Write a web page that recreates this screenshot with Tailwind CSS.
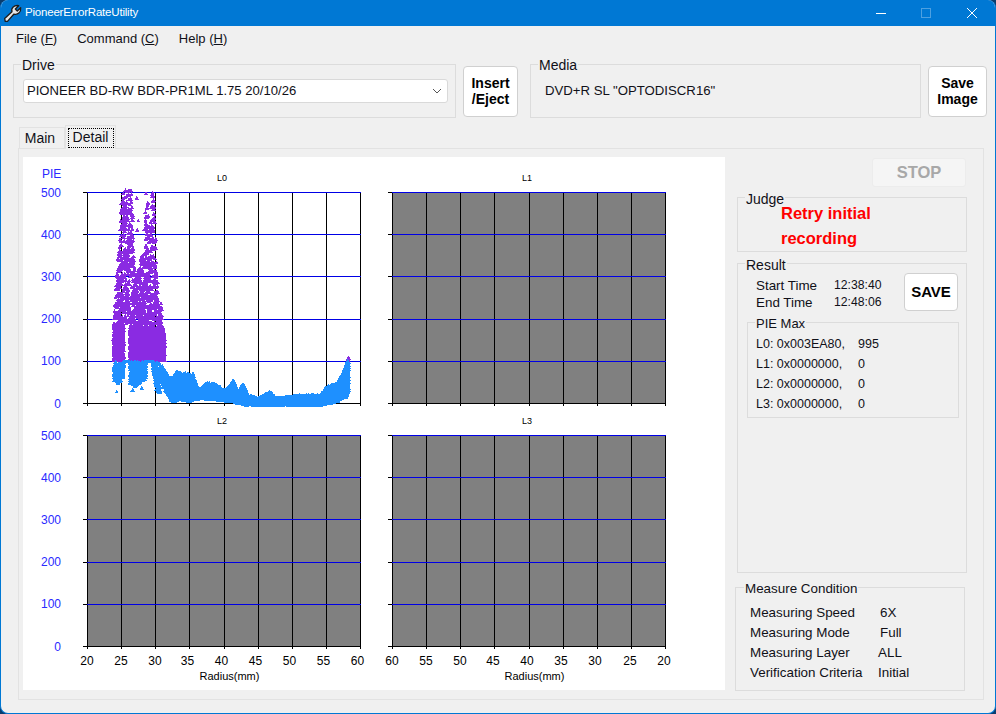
<!DOCTYPE html>
<html lang="en">
<head>
    <meta charset="UTF-8">
    <title>PioneerErrorRateUtility</title>
    <script src="https://cdn.jsdelivr.net/npm/@tailwindcss/browser@4"></script>
</head>
<body class="w-[996px] h-[714px] overflow-hidden bg-[#0a3d6e] font-['Liberation_Sans',Arial,sans-serif] text-[14px] text-[#101018]">

<div class="w-[996px] h-[714px] flex flex-col rounded-t-lg rounded-b-lg overflow-hidden border border-t-0 border-[#0078d4] bg-[#f0f0f0]">

    <!-- title bar -->
    <div class="h-[26px] -mx-px shrink-0 bg-[#0078d4] flex items-center text-white text-[11.5px] tracking-[-0.2px]">
        <svg class="ml-[3px] w-[19px] h-[19px]" viewBox="0 0 17 17">
            <path d="M2 15.5 L1.5 13 L8 7 C7 3.5 10 .8 14 1.5 L11 4.5 L12.8 6.3 L15.8 3.4 C16.3 7.5 13 10 9.8 9 L4 15.5 Z" fill="#e8e8e8" stroke="#1c1c1c" stroke-width="1.2" stroke-linejoin="round"/>
        </svg>
        <span class="ml-[3px]">PioneerErrorRateUtility</span>
        <div class="ml-auto flex items-center">
            <svg class="w-[46px] h-[26px]" viewBox="0 0 46 26"><path d="M21 13.5h10" stroke="#fff"/></svg>
            <svg class="w-[46px] h-[26px]" viewBox="0 0 46 26"><rect x="20.5" y="8.5" width="9" height="9" fill="none" stroke="#fff" stroke-opacity=".3"/></svg>
            <svg class="w-[48px] h-[26px] mr-[1px]" viewBox="0 0 48 26"><path d="M20 8l10 10M30 8l-10 10" stroke="#fff"/></svg>
        </div>
    </div>

    <!-- menu -->
    <div class="h-[25px] shrink-0 flex items-center gap-[20px] pl-[15px] text-[13px]">
        <span>File (<u>F</u>)</span>
        <span>Command (<u>C</u>)</span>
        <span>Help (<u>H</u>)</span>
    </div>

    <!-- drive + media row -->
    <div class="flex items-start mt-[13px] h-[54px] pl-[12px]">
        <div class="relative w-[443px] h-[54px] border border-[#dcdcdc]">
            <span class="absolute left-[7px] -top-[8px] px-[1px] bg-[#f0f0f0] leading-[16px]">Drive</span>
            <div class="mt-[14px] ml-[9px] w-[425px] h-[24px] bg-white border border-[#d9d9d9] rounded-[3px] flex items-center pl-[3px] text-[13.1px]">
                <span>PIONEER BD-RW BDR-PR1ML 1.75 20/10/26</span>
                <svg class="ml-auto mr-[3px] w-[14px] h-[14px]" viewBox="0 0 14 14"><path d="M3 5l4 4 4-4" fill="none" stroke="#555"/></svg>
            </div>
        </div>
        <button class="mt-[2px] ml-[7px] w-[55px] h-[51px] pb-[2px] bg-white border border-[#d0d0d0] rounded-[4px] font-bold leading-[16px] text-black">Insert<br>/Eject</button>
        <div class="relative ml-[12px] w-[391px] h-[54px] border border-[#dcdcdc]">
            <span class="absolute left-[7px] -top-[8px] px-[1px] bg-[#f0f0f0] leading-[16px]">Media</span>
            <p class="mt-[18px] ml-[14px] leading-[16px] text-[13.2px]">DVD+R SL "OPTODISCR16"</p>
        </div>
        <button class="mt-[2px] ml-[7px] w-[59px] h-[51px] pb-[2px] bg-white border border-[#d0d0d0] rounded-[4px] font-bold leading-[16px] text-black">Save<br>Image</button>
    </div>

    <!-- tabs -->
    <div class="flex items-end h-[29px] mt-[1px] pl-[18px]">
        <div class="w-[46px] h-[21px] border border-b-0 border-[#e2e2e2] flex items-center justify-center pr-[4px]">Main</div>
        <div class="w-[51px] h-[24px] border border-b-0 border-[#e2e2e2] bg-[#f0f0f0] flex flex-col items-center pt-[2px] -mb-px relative z-10">
            <span class="w-[46px] h-[20px] border border-dotted border-black flex items-center justify-center leading-none pb-[3px]">Detail</span>
        </div>
    </div>

    <!-- tab page -->
    <div class="w-[966px] h-[552px] ml-[17px] border border-[#e2e2e2] flex">
        <div id="plots" class="ml-[4px] mt-[8px] w-[702px] h-[533px] bg-white grid grid-cols-[360px_342px] grid-rows-[254px_279px]"></div>

        <div class="ml-[12px] w-[230px] flex flex-col">
            <button class="self-end mt-[9px] mr-[1px] w-[94px] h-[29px] bg-[#f5f5f5] border border-[#ececec] rounded-[3px] font-bold text-[16.5px] text-[#a8a8a8]">STOP</button>

            <div class="relative mt-[10px] h-[55px] border border-[#dcdcdc]">
                <span class="absolute left-[7px] -top-[7px] px-[1px] bg-[#f0f0f0] leading-[16px]">Judge</span>
                <p class="ml-[43px] mt-[3px] w-[130px] font-bold text-[16.5px] leading-[25px] text-[#ff0000]">Retry initial recording</p>
            </div>

            <div class="relative mt-[11px] h-[310px] border border-[#dcdcdc]">
                <span class="absolute left-[7px] -top-[7px] px-[1px] bg-[#f0f0f0] leading-[16px]">Result</span>
                <div class="flex items-start">
                    <div class="ml-[18px] mt-[13px] grid grid-cols-[78px_auto] leading-[17px] text-[13.4px]">
                        <span>Start Time</span><span class="text-[12.2px]">12:38:40</span>
                        <span>End Time</span><span class="text-[12.2px]">12:48:06</span>
                    </div>
                    <button class="ml-auto mr-[8px] mt-[9px] w-[54px] h-[38px] bg-white border border-[#d0d0d0] rounded-[4px] font-bold text-[15px] text-black">SAVE</button>
                </div>
                <div class="relative ml-[9px] mt-[11px] w-[212px] h-[96px] border border-[#dcdcdc] pt-[11px] pl-[8px]">
                    <span class="absolute left-[7px] -top-[7px] px-[1px] bg-[#f0f0f0] leading-[16px] text-[13px]">PIE Max</span>
                    <div class="grid grid-cols-[102px_auto] leading-[20px] text-[12.5px] whitespace-nowrap">
                        <span>L0: 0x003EA80,</span><span>995</span>
                        <span>L1: 0x0000000,</span><span>0</span>
                        <span>L2: 0x0000000,</span><span>0</span>
                        <span>L3: 0x0000000,</span><span>0</span>
                    </div>
                </div>
            </div>

            <div class="relative -ml-[2px] mt-[14px] w-[230px] h-[104px] border border-[#dcdcdc] text-[13.4px]">
                <span class="absolute left-[8px] -top-[7px] px-[1px] bg-[#f0f0f0] leading-[16px]">Measure Condition</span>
                <div class="ml-[14px] mt-[15px] grid grid-cols-[130px_auto] leading-[20px] whitespace-nowrap">
                    <span>Measuring Speed</span><span>6X</span>
                    <span>Measuring Mode</span><span>Full</span>
                    <span>Measuring Layer</span><span class="-ml-[2px]">ALL</span>
                    <span>Verification Criteria</span><span class="-ml-[2px]">Initial</span>
                </div>
            </div>
        </div>
    </div>
</div>

<script>
    // small seeded random so the scatter is the same on every load
    let seed = 12345;
    function rnd() {
        seed = (seed * 1664525 + 1013904223) % 4294967296;
        return seed / 4294967296;
    }

    function lerp(table, x) {
        for (let i = 1; i < table.length; i++) {
            if (x <= table[i][0]) {
                const a = table[i - 1], b = table[i];
                return a[1] + (b[1] - a[1]) * (x - a[0]) / (b[0] - a[0]);
            }
        }
        return table[table.length - 1][1];
    }

    function tri(x, y) {
        return `M${x.toFixed(1)} ${(y - 2.2).toFixed(1)}l2.3 3.9h-4.6z`;
    }

    // tables below were read off the reference at 3x; plot origin is page (87, 192)
    const zx = x => 20 + x / 3 - 87;
    const zy = y => 160 + y / 3 - 192;

    function scatter() {
        let purple = '', blue = '';

        // purple towers, top edge
        const top = [[280,520],[285,420],[290,340],[298,240],[303,130],[308,90],[335,90],[340,250],[345,340],[352,340],[360,300],[372,260],[378,95],[383,95],[388,230],[395,95],[402,95],[408,250],[415,430],[425,440],[430,510],[435,540]];
        const notch = x => x > 311 && x < 329;
        for (let i = 0; i < 2000; i++) {
            const x = 281 + rnd() * 153;
            const t = lerp(top, x);
            const y = 600 - (600 - t) * Math.pow(rnd(), 1.7);
            if (notch(x) && y > 490) continue;
            purple += tri(zx(x), zy(y));
        }
        // solid foot of the towers
        for (let i = 0; i < 1500; i++) {
            const x = 283 + rnd() * 150;
            const y = 600 - rnd() * 100;
            if (notch(x) || y < lerp(top, x)) continue;
            purple += tri(zx(x), zy(y));
        }
        [[350,115],[355,182],[352,210],[423,430],[378,100],[398,98]].forEach(p => { purple += tri(zx(p[0]), zy(p[1])); });

        // blue feet under the 100 line
        const foot = [[282,655],[290,672],[300,665],[310,650],[311,605],[329,605],[330,670],[345,680],[360,670],[377,655],[378,605],[398,605],[400,630],[410,690],[420,700]];
        for (let i = 0; i < 900; i++) {
            const x = 282 + rnd() * 138;
            const y = 605 + (lerp(foot, x) - 605) * Math.pow(rnd(), 0.8);
            blue += tri(zx(x), zy(y));
        }
        [[290,695],[338,690],[365,685],[413,695]].forEach(p => { blue += tri(zx(p[0]), zy(p[1])); });

        // low error band, from the second crop: page x = 100 + x/3, page y = 340 + y/3
        const hi = [[185,70],[195,90],[210,115],[230,95],[250,100],[280,100],[295,150],[320,130],[345,130],[375,150],[400,120],[415,150],[430,130],[445,165],[475,175],[510,155],[530,175],[600,165],[660,165],[680,140],[710,130],[730,95],[740,70],[746,45]];
        const lo = [[185,130],[195,150],[215,185],[250,180],[270,185],[300,175],[350,180],[400,185],[430,195],[670,195],[700,188],[740,170],[746,150]];
        const px = x => 100 + x / 3 - 87;
        const py = y => 340 + y / 3 - 192;
        for (let x = 185; x <= 746; x += 0.25) {
            const a = lerp(hi, x), b = lerp(lo, x);
            const n = x > 735 ? 5 : 2;
            for (let k = 0; k < n; k++) {
                const y = a + (b - a) * rnd();
                const s = tri(px(x), py(y));
                if (y < 64) purple += s; else blue += s;
            }
        }
        return `<path d="${purple}" fill="#8a2be2"/><path d="${blue}" fill="#1e90ff"/>`;
    }

    function chart(name, opts) {
        const W = 273, H = 211;
        let s = '';
        if (!opts.data) s += `<rect x="0" y="0" width="${W + 1}" height="${H + 1}" fill="#808080"/>`;
        for (let i = 0; i <= 8; i++) {
            const x = Math.round(i * W / 8) + 0.5;
            s += `<path d="M${x} 0V${H + 3}" stroke="#000"/>`;
        }
        for (let i = 0; i <= 5; i++) {
            const y = Math.round(i * H / 5) + 0.5;
            s += `<path d="M-4 ${y}H0" stroke="#000"/>`;
            s += `<path d="M0 ${y}H${W + 1}" stroke="${i === 5 ? '#000' : '#0000e6'}"/>`;
        }
        if (opts.data) s += scatter();

        let labels = `<text x="${opts.ox + 135}" y="${opts.oy - 11}" text-anchor="middle" font-size="9" fill="#000">${name}</text>`;
        if (opts.yLabels) {
            for (let i = 0; i <= 5; i++) {
                labels += `<text x="${opts.ox - 26}" y="${opts.oy + i * H / 5 + 4.5}" text-anchor="end" font-size="12" fill="#2a2aff">${500 - i * 100}</text>`;
            }
        }
        if (opts.pie) labels += `<text x="${opts.ox - 45}" y="${opts.oy - 14}" font-size="12" fill="#2a2aff">PIE</text>`;
        if (opts.xLabels) {
            opts.xLabels.forEach((v, i) => {
                labels += `<text x="${opts.ox + opts.xAt[i]}" y="${opts.oy + H + 19}" text-anchor="middle" font-size="12" fill="#000">${v}</text>`;
            });
            labels += `<text x="${opts.ox + 142.5}" y="${opts.oy + H + 34}" text-anchor="middle" font-size="11" fill="#000">Radius(mm)</text>`;
        }
        return `<svg width="${opts.w}" height="${opts.h}" viewBox="0 0 ${opts.w} ${opts.h}" class="block">` +
            `<g transform="translate(${opts.ox} ${opts.oy})" shape-rendering="crispEdges">${s}</g>${labels}</svg>`;
    }

    const up = [20, 25, 30, 35, 40, 45, 50, 55, 60];
    const down = [60, 55, 50, 45, 40, 35, 30, 25, 20];
    document.getElementById('plots').innerHTML =
        chart('L0', { w: 360, h: 254, ox: 64, oy: 35, yLabels: true, pie: true, data: true }) +
        chart('L1', { w: 342, h: 254, ox: 9, oy: 35 }) +
        chart('L2', { w: 360, h: 279, ox: 64, oy: 24, yLabels: true, xLabels: up, xAt: [0, 34, 68, 100.5, 134.5, 168.5, 202.5, 236.5, 270.5] }) +
        chart('L3', { w: 342, h: 279, ox: 9, oy: 24, xLabels: down, xAt: [0, 34, 68, 101, 135, 169, 203, 238, 272] });
</script>
</body>
</html>
